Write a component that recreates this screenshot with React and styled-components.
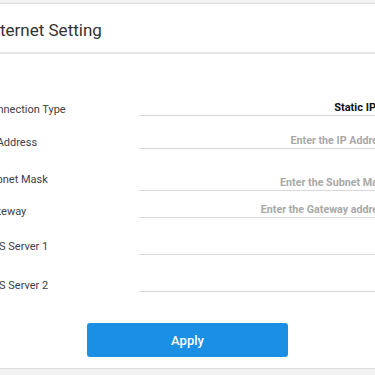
import React from 'react';
import styled, { createGlobalStyle } from 'styled-components';

const Global = createGlobalStyle`
  html, body {
    margin: 0;
    padding: 0;
    background: #f2f2f2;
    font-family: Roboto, "Liberation Sans", Arial, sans-serif;
    overflow: hidden;
  }
`;

const Card = styled.div`
  margin: 3px 0 0 -30px;
  width: 435px;
  background: #fff;
  border-top: 1px solid #dcdcdc;
  border-bottom: 1px solid #dcdcdc;
`;

const Header = styled.div`
  box-sizing: border-box;
  height: 50px;
  padding-top: 4px;
  display: flex;
  align-items: center;
  padding-left: 16px;
  border-bottom: 2px solid #e6e6e6;
`;

const Title = styled.h2`
  margin: 0;
  font-size: 17px;
  font-weight: 400;
  color: #333;
`;

const Body = styled.div`
  padding: 47px 0 11px 14px;
  display: flex;
  flex-direction: column;
`;

const Row = styled.div`
  display: flex;
  align-items: flex-end;
  margin-top: ${(p) => p.$gap || 0}px;
  &:first-child {
    margin-top: 0;
  }
`;

const Label = styled.label`
  width: 155px;
  flex-shrink: 0;
  font-size: 11px;
  line-height: 14px;
  color: #40404a;
  margin-bottom: ${(p) => p.$lift ?? -1}px;
`;

const Field = styled.div`
  flex: 1;
  height: 14px;
  border-bottom: 1px solid #d9d9d9;
  text-align: right;
  padding-right: ${(p) => (p.$select ? 29 : 16)}px;
  font-size: ${(p) => (p.$value ? 11 : 10.7)}px;
  line-height: 14px;
  font-weight: 700;
  color: ${(p) => (p.$value ? '#111' : '#a8a8a8')};
  white-space: nowrap;
  overflow: hidden;
`;

const ButtonRow = styled.div`
  display: flex;
  justify-content: center;
  margin-top: 31px;
  margin-left: -14px;
`;

const ApplyButton = styled.button`
  width: 201px;
  height: 34px;
  border: none;
  border-radius: 3px;
  background: #1a8fe3;
  color: #fff;
  font-family: inherit;
  font-size: 13px;
  font-weight: 500;
  cursor: pointer;
`;

const rows = [
  { label: 'Connection Type', value: 'Static IP', select: true, gap: 0 },
  { label: 'IP Address', placeholder: 'Enter the IP Address', gap: 18 },
  { label: 'Subnet Mask', placeholder: 'Enter the Subnet Mask', gap: 24, lift: 4 },
  { label: 'Gateway', placeholder: 'Enter the Gateway address', gap: 12 },
  { label: 'DNS Server 1', placeholder: '', gap: 22, lift: 1 },
  { label: 'DNS Server 2', placeholder: '', gap: 22 },
];

const App = () => (
  <>
    <Global />
    <Card>
      <Header>
        <Title>Internet Setting</Title>
      </Header>
      <Body>
        {rows.map((r) => (
          <Row key={r.label} $gap={r.gap}>
            <Label $lift={r.lift}>{r.label}</Label>
            <Field $value={!!r.value} $select={r.select}>
              {r.value || r.placeholder}
            </Field>
          </Row>
        ))}
        <ButtonRow>
          <ApplyButton>Apply</ApplyButton>
        </ButtonRow>
      </Body>
    </Card>
  </>
);

export default App;
